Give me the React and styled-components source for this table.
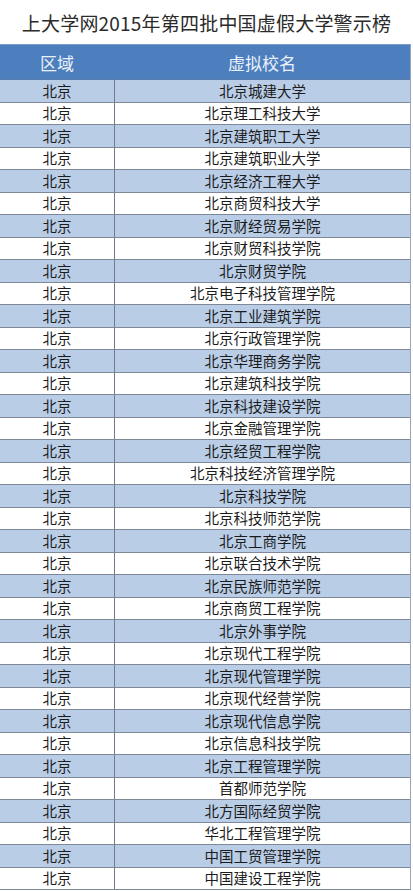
import React from "react";
import styled, { createGlobalStyle } from "styled-components";

const names = [
  "北京城建大学",
  "北京理工科技大学",
  "北京建筑职工大学",
  "北京建筑职业大学",
  "北京经济工程大学",
  "北京商贸科技大学",
  "北京财经贸易学院",
  "北京财贸科技学院",
  "北京财贸学院",
  "北京电子科技管理学院",
  "北京工业建筑学院",
  "北京行政管理学院",
  "北京华理商务学院",
  "北京建筑科技学院",
  "北京科技建设学院",
  "北京金融管理学院",
  "北京经贸工程学院",
  "北京科技经济管理学院",
  "北京科技学院",
  "北京科技师范学院",
  "北京工商学院",
  "北京联合技术学院",
  "北京民族师范学院",
  "北京商贸工程学院",
  "北京外事学院",
  "北京现代工程学院",
  "北京现代管理学院",
  "北京现代经营学院",
  "北京现代信息学院",
  "北京信息科技学院",
  "北京工程管理学院",
  "首都师范学院",
  "北方国际经贸学院",
  "华北工程管理学院",
  "中国工贸管理学院",
  "中国建设工程学院",
];

const Global = createGlobalStyle`
  html, body {
    margin: 0;
    padding: 0;
    background: #ffffff;
  }
  body {
    font-family: "Noto Sans CJK SC", "Noto Sans", sans-serif;
    overflow: hidden;
  }
`;

const Page = styled.div`
  width: 413px;
  height: 891px;
  overflow: hidden;
  background: #fff;
`;

const Title = styled.h1`
  margin: 0;
  height: 44px;
  display: flex;
  align-items: center;
  justify-content: center;
  font-size: 19px;
  font-weight: 400;
  color: #2b2b2b;
  letter-spacing: 0.2px;
  padding-top: 1px;
  box-sizing: border-box;
`;

const Table = styled.div`
  width: 411px;
  border-top: 1px solid #7c9cc8;
  border-right: 1px solid #9aa6b4;
  box-sizing: border-box;
`;

const Row = styled.div`
  display: grid;
  grid-template-columns: 114px 1fr;
  height: ${(p) => (p.$head ? "35px" : "22.5px")};
  background: ${(p) => (p.$head ? "#4d7fbe" : p.$odd ? "#b9cde6" : "#ffffff")};
  border-bottom: 1px solid ${(p) => (p.$head ? "#5a7fae" : "#7f8896")};
  box-sizing: border-box;
`;

const Cell = styled.div`
  display: flex;
  align-items: center;
  justify-content: center;
  font-size: ${(p) => (p.$head ? "17px" : "14.5px")};
  color: ${(p) => (p.$head ? "#eaf1fa" : "#1c1c1c")};
  border-left: ${(p) => (p.$divider ? "1px solid #6f7b8a" : "none")};
  line-height: 1;
  white-space: nowrap;
`;

export default function App() {
  return (
    <Page>
      <Global />
      <Title>上大学网2015年第四批中国虚假大学警示榜</Title>
      <Table>
        <Row $head>
          <Cell $head>区域</Cell>
          <Cell $head>虚拟校名</Cell>
        </Row>
        {names.map((n, i) => (
          <Row key={n} $odd={i % 2 === 0}>
            <Cell>北京</Cell>
            <Cell $divider>{n}</Cell>
          </Row>
        ))}
      </Table>
    </Page>
  );
}
